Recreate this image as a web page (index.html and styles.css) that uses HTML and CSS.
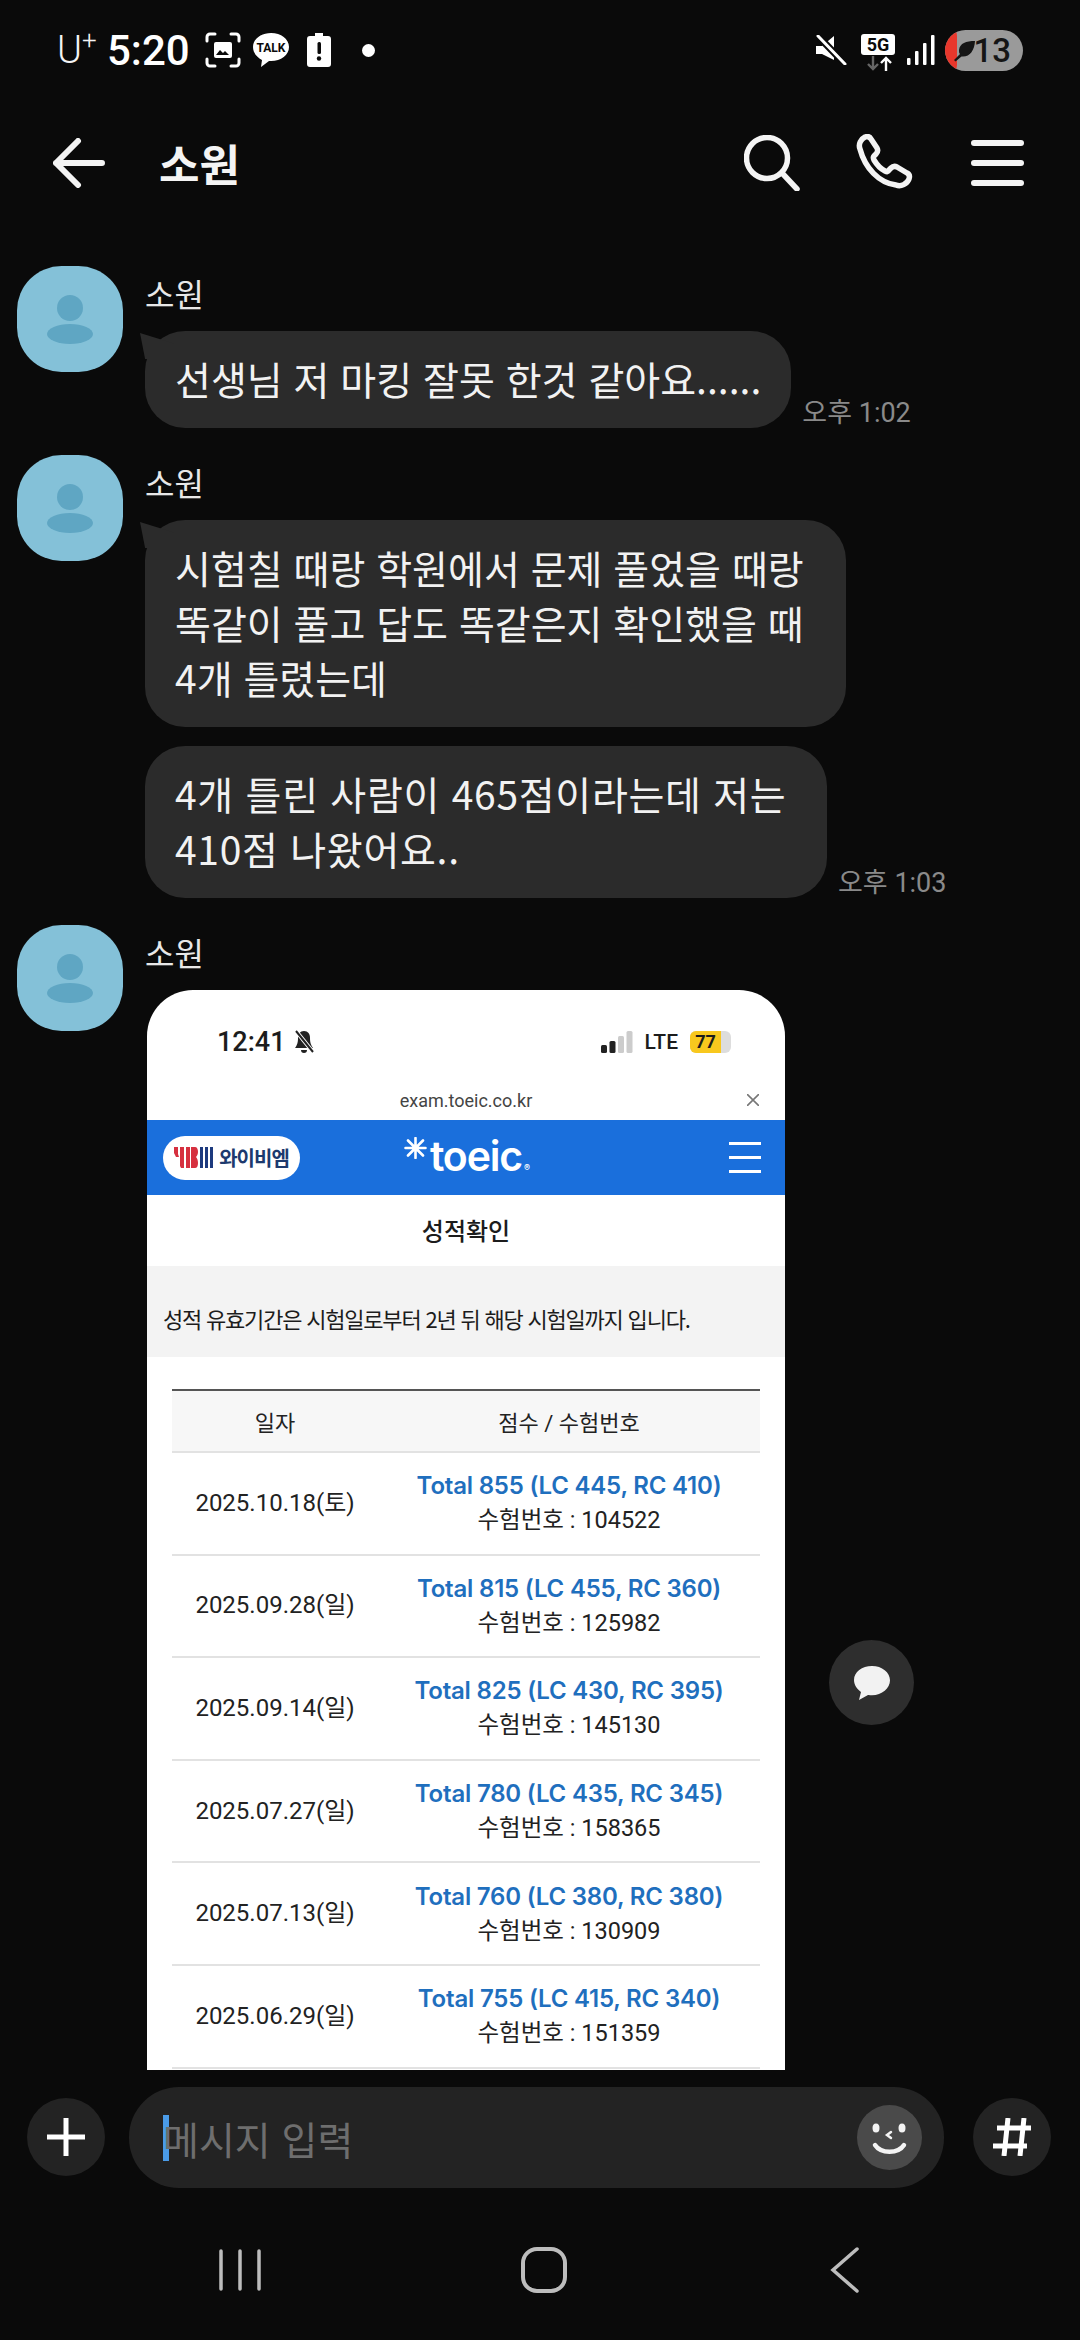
FILE: index.html
```html
<!DOCTYPE html>
<html lang="ko">
<head>
  <meta charset="UTF-8">
  <title>소원</title>
  <link rel="stylesheet" href="styles.css">
</head>
<body>

<div class="app">

  <!-- status bar -->
  <div class="status">
    <div class="status-left">
      <span class="carrier">U<sup>+</sup></span>
      <span class="clock">5:20</span>
      <svg class="ic-shot" width="36" height="36" viewBox="0 0 36 36" fill="none" stroke="#fff" stroke-width="3" stroke-linecap="round">
        <path d="M2 9V5a3 3 0 0 1 3-3h5M26 2h5a3 3 0 0 1 3 3v4M34 27v4a3 3 0 0 1-3 3h-5M10 34H5a3 3 0 0 1-3-3v-4"/>
        <rect x="9" y="10" width="18" height="16" rx="2" fill="#fff" stroke="none"/>
        <path d="M11 23l4-5 3 3 2-2 4 4z" fill="#0a0a0a" stroke="none"/>
      </svg>
      <svg class="ic-talk" width="38" height="36" viewBox="0 0 38 36">
        <path d="M19 1C9 1 1 7 1 15c0 6 4 10 9 13l-1 7 8-6h2c10 0 18-6 18-14S29 1 19 1z" fill="#fff"/>
        <text x="19" y="20" class="talk-txt" text-anchor="middle">TALK</text>
      </svg>
      <svg class="ic-batt" width="24" height="34" viewBox="0 0 24 34">
        <path d="M8 0h8v3h5a3 3 0 0 1 3 3v25a3 3 0 0 1-3 3H3a3 3 0 0 1-3-3V6a3 3 0 0 1 3-3h5z" fill="#fff"/>
        <rect x="10.5" y="9" width="3.5" height="12" rx="1.5" fill="#0a0a0a"/>
        <circle cx="12" cy="25.5" r="2.2" fill="#0a0a0a"/>
      </svg>
      <span class="dot"></span>
    </div>
    <div class="status-right">
      <svg width="32" height="30" viewBox="0 0 32 30">
        <path d="M1 11h6l12-10v24L7 19H1z" fill="#fff"/>
        <path d="M3 1l27 28" stroke="#0a0a0a" stroke-width="7"/>
        <path d="M3 1l27 28" stroke="#fff" stroke-width="3" stroke-linecap="round"/>
      </svg>
      <div class="net">
        <span class="net-5g">5G</span>
        <svg width="30" height="15" viewBox="0 0 30 15" fill="none" stroke-width="2.4">
          <path d="M10 0v13M5 8l5 5 5-5" stroke="#666"/>
          <path d="M23 15V2M18 7l5-5 5 5" stroke="#fff"/>
        </svg>
      </div>
      <svg class="ic-signal" width="28" height="30" viewBox="0 0 28 30" fill="#fff">
        <rect x="0" y="23" width="3.5" height="7" rx="1"/>
        <rect x="8" y="16" width="3.5" height="14" rx="1"/>
        <rect x="16" y="8" width="3.5" height="22" rx="1"/>
        <rect x="24" y="0" width="3.5" height="30" rx="1"/>
      </svg>
      <div class="pill">
        <span class="pill-red"></span>
        <svg class="pill-leaf" width="21" height="22" viewBox="0 0 21 22">
          <path d="M21 1c-9 0-15 2-16 9 0 2 0 3 1 4l-6 6 1.500 1.500 6-5c8 1 13-6 13.500-15.500z" fill="#151515"/>
        </svg>
        <span class="pill-num">13</span>
      </div>
    </div>
  </div>

  <!-- top bar -->
  <div class="topbar">
    <svg class="back" width="52" height="50" viewBox="0 0 52 50" fill="none" stroke="#f4f4f4" stroke-width="6" stroke-linecap="round" stroke-linejoin="round">
      <path d="M49 25H3M25 3L3 25l22 22"/>
    </svg>
    <div class="top-title">소원</div>
    <svg width="56" height="56" viewBox="0 0 56 56" fill="none" stroke="#f4f4f4" stroke-width="5.5" stroke-linecap="round">
      <circle cx="23" cy="23" r="20.5"/>
      <path d="M38 38l15 16"/>
    </svg>
    <svg class="ic-phone" width="58" height="58" viewBox="0 0 58 58" fill="none" stroke="#f4f4f4" stroke-width="5.5" stroke-linejoin="round">
      <path d="M4 15c-2-5 1-10 5-12 3-1 5 0 6 2l6 9c1 2 1 4-1 6l-2 2c-1 1-1 2 0 4 3 5 7 9 11 11 2 1 3 1 4-1l2-2c2-2 4-2 6-1l10 6c2 1 3 3 2 6-2 5-8 8-13 6C23 49 9 34 4 15z"/>
    </svg>
    <div class="burger"><span></span><span></span><span></span></div>
  </div>

  <!-- chat -->
  <div class="chat">

    <div class="msg">
      <div class="avatar">
        <svg width="48" height="50" viewBox="0 0 48 50" fill="#5fa6c3"><circle cx="24" cy="14" r="13"/><ellipse cx="24" cy="40" rx="23" ry="10"/></svg>
      </div>
      <div class="msg-body">
        <div class="name">소원</div>
        <div class="row">
          <div class="bubble tail">선생님 저 마킹 잘못 한것 같아요......</div>
          <span class="time">오후 1:02</span>
        </div>
      </div>
    </div>

    <div class="msg">
      <div class="avatar">
        <svg width="48" height="50" viewBox="0 0 48 50" fill="#5fa6c3"><circle cx="24" cy="14" r="13"/><ellipse cx="24" cy="40" rx="23" ry="10"/></svg>
      </div>
      <div class="msg-body">
        <div class="name">소원</div>
        <div class="row">
          <div class="bubble tail b2">시험칠 때랑 학원에서 문제 풀었을 때랑<br>똑같이 풀고 답도 똑같은지 확인했을 때<br>4개 틀렸는데</div>
        </div>
        <div class="row row-next">
          <div class="bubble b3">4개 틀린 사람이 465점이라는데 저는<br>410점 나왔어요..</div>
          <span class="time">오후 1:03</span>
        </div>
      </div>
    </div>

    <div class="msg">
      <div class="avatar">
        <svg width="48" height="50" viewBox="0 0 48 50" fill="#5fa6c3"><circle cx="24" cy="14" r="13"/><ellipse cx="24" cy="40" rx="23" ry="10"/></svg>
      </div>
      <div class="msg-body">
        <div class="name">소원</div>

        <!-- attached screenshot -->
        <div class="shot">
          <div class="shot-status">
            <span class="shot-clock">12:41</span>
            <svg width="22" height="24" viewBox="0 0 22 24">
              <path d="M11 1c-4 0-6 3-6 7 0 5-1 7-3 10h18c-2-3-3-5-3-10 0-4-2-7-6-7zM8 20h6a3 3 0 0 1-6 0z" fill="#222"/>
              <path d="M3 1l17 21" stroke="#fff" stroke-width="4"/>
              <path d="M3 1l17 21" stroke="#222" stroke-width="2"/>
            </svg>
            <span class="shot-gap"></span>
            <svg width="32" height="22" viewBox="0 0 32 22">
              <rect x="0" y="14" width="6" height="8" rx="1.5" fill="#222"/>
              <rect x="8.500" y="10" width="6" height="12" rx="1.5" fill="#222"/>
              <rect x="17" y="5" width="6" height="17" rx="1.5" fill="#ccc"/>
              <rect x="25.500" y="0" width="6" height="22" rx="1.5" fill="#ccc"/>
            </svg>
            <span class="shot-lte">LTE</span>
            <span class="shot-batt"><span class="shot-batt-fill">77</span></span>
          </div>
          <div class="shot-url">
            <span>exam.toeic.co.kr</span>
            <svg class="shot-x" width="12" height="12" viewBox="0 0 12 12" stroke="#777" stroke-width="1.6"><path d="M0 0l12 12M12 0L0 12"/></svg>
          </div>
          <div class="shot-nav">
            <div class="ybm">
              <svg width="39" height="21" viewBox="0 0 39 21">
                <path d="M0 0h4v7l1 3H2L0 6zM6 0h4v21H7l-1-2z" fill="#d6303f"/>
                <path d="M12 0h4v21h-4zM17 0h4c2 0 3 2 3 5 0 2-1 4-2 5 1 1 2 3 2 6 0 3-1 5-3 5h-4z" fill="#d6303f"/>
                <rect x="26" y="0" width="3" height="21" fill="#1d3a7e"/>
                <rect x="31" y="0" width="3" height="21" fill="#1d3a7e"/>
                <rect x="36" y="0" width="3" height="21" fill="#1d3a7e"/>
              </svg>
              <span>와이비엠</span>
            </div>
            <div class="toeic">
              <svg class="toeic-star" width="23" height="22" viewBox="0 0 23 22" stroke="#fff" stroke-width="2.6" stroke-linecap="round">
                <path d="M11.500 1v20M1.500 11h20M4 3.500l15 15M19 3.500l-15 15"/>
              </svg>
              <span>toeic</span><span class="toeic-r">®</span>
            </div>
            <div class="shot-burger"><span></span><span></span><span></span></div>
          </div>
          <div class="shot-title">성적확인</div>
          <div class="shot-note">성적 유효기간은 시험일로부터 2년 뒤 해당 시험일까지 입니다.</div>

          <div class="scores">
            <div class="scores-head">
              <div>일자</div>
              <div>점수 / 수험번호</div>
            </div>
            <div class="score-row">
              <div class="date">2025.10.18(토)</div>
              <div><div class="total">Total 855 (LC 445, RC 410)</div><div>수험번호 : 104522</div></div>
            </div>
            <div class="score-row">
              <div class="date">2025.09.28(일)</div>
              <div><div class="total">Total 815 (LC 455, RC 360)</div><div>수험번호 : 125982</div></div>
            </div>
            <div class="score-row">
              <div class="date">2025.09.14(일)</div>
              <div><div class="total">Total 825 (LC 430, RC 395)</div><div>수험번호 : 145130</div></div>
            </div>
            <div class="score-row">
              <div class="date">2025.07.27(일)</div>
              <div><div class="total">Total 780 (LC 435, RC 345)</div><div>수험번호 : 158365</div></div>
            </div>
            <div class="score-row">
              <div class="date">2025.07.13(일)</div>
              <div><div class="total">Total 760 (LC 380, RC 380)</div><div>수험번호 : 130909</div></div>
            </div>
            <div class="score-row">
              <div class="date">2025.06.29(일)</div>
              <div><div class="total">Total 755 (LC 415, RC 340)</div><div>수험번호 : 151359</div></div>
            </div>
          </div>
        </div>
      </div>
    </div>

    <!-- floating comment button -->
    <div class="float-btn">
      <svg width="38" height="36" viewBox="0 0 38 36"><path d="M19 1C9 1 1 7 1 15c0 5 3 9 7 12l-2 8 9-5c1 0 3 .3 4 .3 10 0 18-7 18-15S29 1 19 1z" fill="#f2f2f2"/></svg>
    </div>
  </div>

  <!-- input -->
  <div class="inputbar">
    <div class="round-btn">
      <svg width="38" height="38" viewBox="0 0 38 38" stroke="#fff" stroke-width="5"><path d="M19 0v38M0 19h38"/></svg>
    </div>
    <div class="input">
      <span class="caret"></span>
      <span class="placeholder">메시지 입력</span>
      <div class="smile">
        <svg width="65" height="65" viewBox="0 0 65 65" fill="none" stroke="#f4f4f4" stroke-width="4.500" stroke-linecap="round">
          <ellipse cx="19" cy="23" rx="3.500" ry="4.500" fill="#f4f4f4" stroke="none"/>
          <ellipse cx="45" cy="23" rx="3.500" ry="4.500" fill="#f4f4f4" stroke="none"/>
          <path d="M18 40c6 9 23 9 29 0"/>
          <path d="M34 27l-4 3 4 3" stroke-width="2.500"/>
        </svg>
      </div>
    </div>
    <div class="round-btn hash-btn">
      <svg width="38" height="38" viewBox="0 0 38 38" stroke="#fff" stroke-width="5"><path d="M15 0l-4 38M31 0l-4 38M4 10h34M0 28h34"/></svg>
    </div>
  </div>

  <!-- android nav -->
  <div class="navbar">
    <svg width="44" height="44" viewBox="0 0 44 44" stroke="#bdbdbd" stroke-width="3.500" stroke-linecap="round"><path d="M3 3v38M22 3v38M41 3v38"/></svg>
    <svg class="nav-home" width="46" height="46" viewBox="0 0 46 46" fill="none" stroke="#bdbdbd" stroke-width="4"><rect x="2" y="2" width="42" height="42" rx="14"/></svg>
    <svg width="30" height="46" viewBox="0 0 30 46" fill="none" stroke="#bdbdbd" stroke-width="3.500" stroke-linecap="round"><path d="M27 2L3 23l24 21"/></svg>
  </div>

</div>

</body>
</html>
```

FILE: styles.css
```css
* {
  box-sizing: border-box;
}

body {
  margin: 0;
  background: #0a0a0a;
  font-family: "Noto Sans CJK KR", Roboto, sans-serif;
  color: #f2f2f2;
}

.app {
  width: 1080px;
  height: 2340px;
  display: flex;
  flex-direction: column;
  overflow: hidden;
  background: #0a0a0a;
}

/* status bar */
.status {
  height: 100px;
  flex: none;
  display: flex;
  align-items: center;
  justify-content: space-between;
  padding: 0 57px;
}

.status-left,
.status-right {
  display: flex;
  align-items: center;
}

.carrier {
  font-family: Roboto, sans-serif;
  font-size: 38px;
  font-weight: 300;
  color: #f4f4f4;
  width: 50px;
}

.carrier sup {
  font-size: 26px;
  line-height: 0;
  vertical-align: 14px;
}

.clock {
  font-family: Roboto, sans-serif;
  font-size: 42px;
  font-weight: 500;
  color: #fff;
  width: 98px;
}

.ic-talk {
  margin-left: 11px;
}

.ic-batt {
  margin-left: 17px;
}

.talk-txt {
  font-family: Roboto, sans-serif;
  font-size: 12px;
  font-weight: 700;
  fill: #0a0a0a;
}

.dot {
  width: 13px;
  height: 13px;
  border-radius: 50%;
  background: #fff;
  margin-left: 31px;
}

.net {
  display: flex;
  flex-direction: column;
  align-items: center;
  margin-left: 14px;
  margin-top: 4px;
  gap: 1px;
}

.net-5g {
  width: 34px;
  height: 21px;
  background: #fff;
  color: #0a0a0a;
  border-radius: 3px;
  font-family: Roboto, sans-serif;
  font-size: 18px;
  font-weight: 700;
  line-height: 21px;
  text-align: center;
}

.ic-signal {
  margin-left: 12px;
}

.pill {
  position: relative;
  width: 78px;
  height: 41px;
  margin-left: 10px;
  border-radius: 21px;
  background: #9a9a9a;
  overflow: hidden;
  display: flex;
  align-items: center;
  justify-content: flex-end;
  padding-right: 12px;
}

.pill-red {
  position: absolute;
  left: -8px;
  top: -4px;
  bottom: -4px;
  width: 20px;
  border-radius: 0 10px 10px 0;
  background: #e8372c;
}

.pill-leaf {
  position: absolute;
  left: 9px;
  top: 10px;
}

.pill-num {
  font-family: Roboto, sans-serif;
  font-size: 33px;
  font-weight: 500;
  color: #151515;
  line-height: 41px;
}

/* top bar */
.topbar {
  height: 126px;
  flex: none;
  display: flex;
  align-items: center;
  padding: 0 56px 0 53px;
}

.top-title {
  font-size: 44px;
  font-weight: 700;
  margin-left: 54px;
  flex: 1;
  color: #f4f4f4;
}

.ic-phone {
  margin-left: 56px;
}

.burger {
  width: 53px;
  margin-left: 57px;
  display: flex;
  flex-direction: column;
  gap: 14px;
}

.burger span {
  height: 6px;
  border-radius: 3px;
  background: #f4f4f4;
}

/* chat */
.chat {
  position: relative;
  height: 1844px;
  flex: none;
  overflow: hidden;
  padding: 40px 0 0 17px;
}

.msg {
  display: flex;
  gap: 22px;
  margin-bottom: 27px;
}

.avatar {
  width: 106px;
  height: 106px;
  flex: none;
  border-radius: 42%;
  background: #84c1d8;
  display: flex;
  align-items: center;
  justify-content: center;
}

.name {
  height: 65px;
  padding-top: 2px;
  font-size: 32px;
  line-height: 50px;
  color: #e8e8e8;
}

.row {
  display: flex;
  align-items: flex-end;
  gap: 11px;
}

.row-next {
  margin-top: 19px;
}

.bubble {
  position: relative;
  background: #2b2b2b;
  border-radius: 40px;
  padding: 20px 30px 22px;
  font-size: 39px;
  line-height: 55px;
  color: #f2f2f2;
  white-space: nowrap;
}

.tail::before {
  content: "";
  position: absolute;
  left: -5px;
  top: 2px;
  width: 34px;
  height: 26px;
  background: #2b2b2b;
  clip-path: polygon(0 0, 100% 40%, 100% 100%, 15% 100%);
}

.b2 {
  width: 701px;
}

.b3 {
  width: 682px;
  letter-spacing: .7px;
}

.time {
  font-family: Roboto, "Noto Sans CJK KR", sans-serif;
  font-size: 27px;
  letter-spacing: normal;
  line-height: 30px;
  color: #8a8a8a;
  white-space: nowrap;
}

/* attached screenshot */
.shot {
  width: 638px;
  margin-left: 2px;
  height: 1200px;
  border-radius: 46px 46px 0 0;
  background: #fff;
  color: #1c1c1c;
  overflow: hidden;
}

.shot-status {
  height: 92px;
  display: flex;
  align-items: center;
  padding: 12px 54px 0 70px;
}

.shot-clock {
  font-family: Roboto, sans-serif;
  font-size: 27px;
  font-weight: 500;
  margin-right: 7px;
}

.shot-gap {
  flex: 1;
}

.shot-lte {
  font-family: Roboto, sans-serif;
  font-size: 21px;
  font-weight: 500;
  margin: 0 12px;
}

.shot-batt {
  width: 41px;
  height: 22px;
  background: #ddd;
  border-radius: 6px;
  overflow: hidden;
}

.shot-batt-fill {
  display: block;
  width: 31px;
  height: 22px;
  background: #f8c81e;
  font-family: Roboto, sans-serif;
  font-size: 18px;
  font-weight: 700;
  line-height: 22px;
  text-align: center;
}

.shot-url {
  position: relative;
  height: 38px;
  font-family: Roboto, sans-serif;
  font-size: 18px;
  line-height: 38px;
  text-align: center;
  color: #444;
}

.shot-x {
  position: absolute;
  right: 26px;
  top: 12px;
}

.shot-nav {
  height: 75px;
  background: #1a6fdc;
  display: flex;
  align-items: center;
  padding: 0 24px 0 16px;
}

.ybm {
  width: 137px;
  height: 44px;
  border-radius: 22px;
  background: #fff;
  display: flex;
  align-items: center;
  justify-content: center;
  gap: 6px;
  font-size: 20px;
  font-weight: 700;
  letter-spacing: -1px;
  color: #1d3a6e;
}

.toeic {
  display: flex;
  align-items: flex-start;
  margin-left: 104px;
  font-family: Inter, Roboto, sans-serif;
  font-size: 41px;
  font-weight: 600;
  letter-spacing: -1.2px;
  color: #fff;
  line-height: 48px;
  padding-top: 9px;
}

.toeic-star {
  margin: 5px 3px 0 0;
}

.toeic-r {
  font-size: 9px;
  letter-spacing: 0;
  margin: 12px 0 0 2px;
}

.shot-burger {
  width: 32px;
  margin-left: auto;
  display: flex;
  flex-direction: column;
  gap: 11px;
}

.shot-burger span {
  height: 3px;
  background: #fff;
}

.shot-title {
  height: 71px;
  font-size: 24px;
  font-weight: 500;
  line-height: 70px;
  text-align: center;
}

.shot-note {
  height: 91px;
  background: #f3f3f3;
  padding-left: 16px;
  font-size: 22px;
  letter-spacing: -1.2px;
  line-height: 105px;
}

.scores {
  margin: 32px 25px 0;
  border-top: 2px solid #555;
  font-family: Roboto, "Noto Sans CJK KR", sans-serif;
  font-size: 23.5px;
  color: #222;
  text-align: center;
}

.scores-head,
.score-row {
  display: grid;
  grid-template-columns: 206px 1fr;
  align-items: center;
  border-bottom: 2px solid #e2e2e2;
}

.scores-head {
  height: 62px;
  font-size: 22px;
  background: #f7f7f7;
}

.score-row {
  height: 102.6px;
  line-height: 35px;
}

.date {
  font-size: 24px;
}

.total {
  font-family: Inter, Roboto, sans-serif;
  font-size: 24px;
  font-weight: 600;
  letter-spacing: -.2px;
  color: #1f6fbe;
}

/* floating button */
.float-btn {
  position: absolute;
  left: 829px;
  top: 1414px;
  width: 85px;
  height: 85px;
  border-radius: 50%;
  background: #2e2e2e;
  display: flex;
  align-items: center;
  justify-content: center;
}

/* input */
.inputbar {
  height: 118px;
  flex: none;
  display: flex;
  align-items: flex-end;
  gap: 24px;
  padding: 0 29px 0 27px;
}

.round-btn {
  width: 78px;
  height: 78px;
  flex: none;
  border-radius: 50%;
  background: #232323;
  display: flex;
  align-items: center;
  justify-content: center;
  margin-bottom: 12px;
}

.hash-btn {
  margin-left: 5px;
}

.input {
  flex: 1;
  height: 101px;
  border-radius: 50px;
  background: #232323;
  display: flex;
  align-items: center;
  padding: 0 22px 0 34px;
}

.caret {
  width: 6px;
  height: 46px;
  background: #4a9be8;
}

.placeholder {
  flex: 1;
  font-size: 39px;
  color: #6e6e6e;
  margin-left: -6px;
}

.smile {
  width: 65px;
  height: 65px;
  border-radius: 50%;
  background: #4a4a4a;
}

.smile svg {
  display: block;
}

/* android nav */
.navbar {
  height: 152px;
  flex: none;
  display: flex;
  align-items: center;
  padding: 12px 220px 0 218px;
  justify-content: space-between;
}

.nav-home {
  margin-left: -4px;
}
```
